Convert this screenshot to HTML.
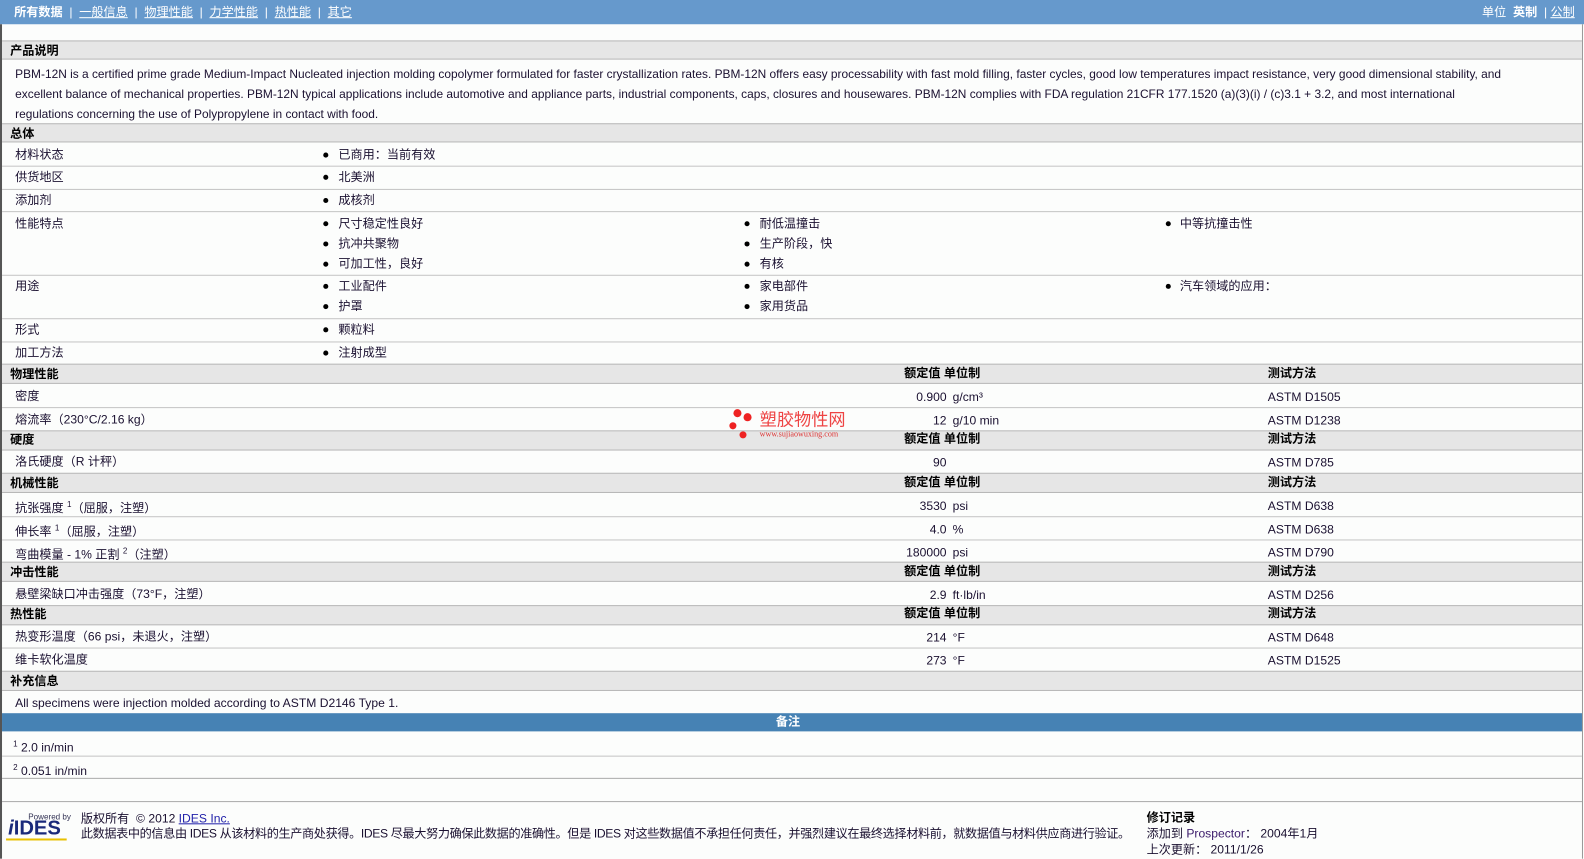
<!DOCTYPE html>
<html><head><meta charset="utf-8"><style>
*{margin:0;padding:0;box-sizing:border-box}
body{width:1584px;height:850px;background:#fcfdfc;overflow:hidden;font-family:"Liberation Sans","Noto Sans CJK SC",sans-serif;font-size:12px;color:#1a1030}
#w{position:absolute;left:0;top:0;width:1568px;height:842px;transform:scale(1.0102);transform-origin:0 0}
.a{position:absolute;white-space:nowrap;line-height:14px}
.hdr{position:absolute;left:0;top:0;width:1568px;height:24px;background:#6699cc}
.hdr .a{color:#fff;top:5px}
.hdr u{color:#fff}
.g{position:absolute;left:2px;width:1564px;background:#e6e6e6;border-top:1px solid #b8b8b8;border-bottom:1px solid #b8b8b8}
.l{position:absolute;left:2px;width:1564px;height:1px;background:#c4c4c4}
.b{font-weight:bold;color:#000}
.dot{position:absolute;width:5px;height:5px;border-radius:50%;background:#000}
</style></head><body><div id="w">
<div class="hdr">
<div class="a" style="left:14px"><b>所有数据</b> &nbsp;| &nbsp;<u>一般信息</u> &nbsp;| &nbsp;<u>物理性能</u> &nbsp;| &nbsp;<u>力学性能</u> &nbsp;| &nbsp;<u>热性能</u> &nbsp;| &nbsp;<u>其它</u></div>
<div class="a" style="left:1467px">单位 &nbsp;<b>英制</b> &nbsp;| <u>公制</u></div>
</div>
<div style="position:absolute;left:0;top:24px;width:2px;height:826px;background:#555"></div>
<div style="position:absolute;left:1566px;top:24px;width:1px;height:826px;background:#999"></div>

<div class="g" style="top:40px;height:19px"></div><div class="a b" style="left:10px;top:43px">产品说明</div>
<div class="a" style="left:15px;top:63px;line-height:20px;font-size:11.8px">PBM-12N is a certified prime grade Medium-Impact Nucleated injection molding copolymer formulated for faster crystallization rates. PBM-12N offers easy processability with fast mold filling, faster cycles, good low temperatures impact resistance, very good dimensional stability, and<br>excellent balance of mechanical properties. PBM-12N typical applications include automotive and appliance parts, industrial components, caps, closures and housewares. PBM-12N complies with FDA regulation 21CFR 177.1520 (a)(3)(i) / (c)3.1 + 3.2, and most international<br>regulations concerning the use of Polypropylene in contact with food.</div>

<div class="g" style="top:122px;height:19px"></div><div class="a b" style="left:10px;top:125px">总体</div>
<div class="a" style="left:15px;top:146px">材料状态</div><div class="dot" style="left:320px;top:151px"></div><div class="a" style="left:335px;top:146px">已商用：当前有效</div>
<div class="l" style="top:164px"></div>
<div class="a" style="left:15px;top:168px">供货地区</div><div class="dot" style="left:320px;top:173px"></div><div class="a" style="left:335px;top:168px">北美洲</div>
<div class="l" style="top:187px"></div>
<div class="a" style="left:15px;top:191px">添加剂</div><div class="dot" style="left:320px;top:196px"></div><div class="a" style="left:335px;top:191px">成核剂</div>
<div class="l" style="top:209px"></div>
<div class="a" style="left:15px;top:214px">性能特点</div>
<div class="dot" style="left:320px;top:219px"></div><div class="a" style="left:335px;top:214px">尺寸稳定性良好</div>
<div class="dot" style="left:320px;top:239px"></div><div class="a" style="left:335px;top:234px">抗冲共聚物</div>
<div class="dot" style="left:320px;top:259px"></div><div class="a" style="left:335px;top:254px">可加工性，良好</div>
<div class="dot" style="left:737px;top:219px"></div><div class="a" style="left:752px;top:214px">耐低温撞击</div>
<div class="dot" style="left:737px;top:239px"></div><div class="a" style="left:752px;top:234px">生产阶段，快</div>
<div class="dot" style="left:737px;top:259px"></div><div class="a" style="left:752px;top:254px">有核</div>
<div class="dot" style="left:1154px;top:219px"></div><div class="a" style="left:1168px;top:214px">中等抗撞击性</div>
<div class="l" style="top:272px"></div>
<div class="a" style="left:15px;top:276px">用途</div>
<div class="dot" style="left:320px;top:281px"></div><div class="a" style="left:335px;top:276px">工业配件</div>
<div class="dot" style="left:320px;top:301px"></div><div class="a" style="left:335px;top:296px">护罩</div>
<div class="dot" style="left:737px;top:281px"></div><div class="a" style="left:752px;top:276px">家电部件</div>
<div class="dot" style="left:737px;top:301px"></div><div class="a" style="left:752px;top:296px">家用货品</div>
<div class="dot" style="left:1154px;top:281px"></div><div class="a" style="left:1168px;top:276px">汽车领域的应用：</div>
<div class="l" style="top:315px"></div>
<div class="a" style="left:15px;top:319px">形式</div><div class="dot" style="left:320px;top:324px"></div><div class="a" style="left:335px;top:319px">颗粒料</div>
<div class="l" style="top:338px"></div>
<div class="a" style="left:15px;top:342px">加工方法</div><div class="dot" style="left:320px;top:347px"></div><div class="a" style="left:335px;top:342px">注射成型</div>

<div class="g" style="top:360px;height:20px"></div><div class="a b" style="left:10px;top:363px">物理性能</div>
<div class="a b" style="left:895px;top:362px">额定值 单位制</div><div class="a b" style="left:1255px;top:362px">测试方法</div>
<div class="a" style="left:15px;top:385px">密度</div><div class="a" style="right:631px;top:386px">0.900</div><div class="a" style="left:943px;top:386px">g/cm³</div><div class="a" style="left:1255px;top:386px">ASTM D1505</div>
<div class="l" style="top:403px"></div>
<div class="a" style="left:15px;top:408px">熔流率（230°C/2.16 kg）</div><div class="a" style="right:631px;top:409px">12</div><div class="a" style="left:943px;top:409px">g/10 min</div><div class="a" style="left:1255px;top:409px">ASTM D1238</div>

<div class="g" style="top:426px;height:20px"></div><div class="a b" style="left:10px;top:428px">硬度</div>
<div class="a b" style="left:895px;top:427px">额定值 单位制</div><div class="a b" style="left:1255px;top:427px">测试方法</div>
<div class="a" style="left:15px;top:450px">洛氏硬度（R 计秤）</div><div class="a" style="right:631px;top:451px">90</div><div class="a" style="left:1255px;top:451px">ASTM D785</div>

<div class="g" style="top:468px;height:20px"></div><div class="a b" style="left:10px;top:471px">机械性能</div>
<div class="a b" style="left:895px;top:470px">额定值 单位制</div><div class="a b" style="left:1255px;top:470px">测试方法</div>
<div class="a" style="left:15px;top:493px">抗张强度 <sup style="font-size:8px">1</sup>（屈服，注塑）</div><div class="a" style="right:631px;top:494px">3530</div><div class="a" style="left:943px;top:494px">psi</div><div class="a" style="left:1255px;top:494px">ASTM D638</div>
<div class="l" style="top:511px"></div>
<div class="a" style="left:15px;top:516px">伸长率 <sup style="font-size:8px">1</sup>（屈服，注塑）</div><div class="a" style="right:631px;top:517px">4.0</div><div class="a" style="left:943px;top:517px">%</div><div class="a" style="left:1255px;top:517px">ASTM D638</div>
<div class="l" style="top:534px"></div>
<div class="a" style="left:15px;top:539px">弯曲模量 - 1% 正割 <sup style="font-size:8px">2</sup>（注塑）</div><div class="a" style="right:631px;top:540px">180000</div><div class="a" style="left:943px;top:540px">psi</div><div class="a" style="left:1255px;top:540px">ASTM D790</div>

<div class="g" style="top:556px;height:20px"></div><div class="a b" style="left:10px;top:559px">冲击性能</div>
<div class="a b" style="left:895px;top:558px">额定值 单位制</div><div class="a b" style="left:1255px;top:558px">测试方法</div>
<div class="a" style="left:15px;top:581px">悬壁梁缺口冲击强度（73°F，注塑）</div><div class="a" style="right:631px;top:582px">2.9</div><div class="a" style="left:943px;top:582px">ft·lb/in</div><div class="a" style="left:1255px;top:582px">ASTM D256</div>

<div class="g" style="top:599px;height:20px"></div><div class="a b" style="left:10px;top:601px">热性能</div>
<div class="a b" style="left:895px;top:600px">额定值 单位制</div><div class="a b" style="left:1255px;top:600px">测试方法</div>
<div class="a" style="left:15px;top:623px">热变形温度（66 psi，未退火，注塑）</div><div class="a" style="right:631px;top:624px">214</div><div class="a" style="left:943px;top:624px">°F</div><div class="a" style="left:1255px;top:624px">ASTM D648</div>
<div class="l" style="top:641px"></div>
<div class="a" style="left:15px;top:646px">维卡软化温度</div><div class="a" style="right:631px;top:647px">273</div><div class="a" style="left:943px;top:647px">°F</div><div class="a" style="left:1255px;top:647px">ASTM D1525</div>

<div class="g" style="top:664px;height:20px"></div><div class="a b" style="left:10px;top:667px">补充信息</div>
<div class="a" style="left:15px;top:689px">All specimens were injection molded according to ASTM D2146 Type 1.</div>
<div style="position:absolute;left:2px;top:706px;width:1564px;height:18px;background:#4682b4"></div>
<div class="a" style="left:768px;top:707px;color:#fff;font-weight:bold">备注</div>
<div class="a" style="left:13px;top:730px"><sup style="font-size:8px">1</sup> 2.0 in/min</div>
<div class="l" style="top:748px"></div>
<div class="a" style="left:13px;top:753px"><sup style="font-size:8px">2</sup> 0.051 in/min</div>
<div class="l" style="top:770px;background:#aaa"></div>
<div class="l" style="top:793px;background:#aaa"></div>

<div class="a" style="left:28px;top:802px;font-size:8px;color:#335">Powered by</div>
<div class="a" style="left:8px;top:809px;font-size:20px;line-height:22px;font-weight:bold;color:#1a2a7a;font-style:italic">i<span style="font-style:normal">IDES</span></div>
<div style="position:absolute;left:6px;top:830px;width:60px;height:2px;background:#e8c000"></div>
<div class="a" style="left:80px;top:803px">版权所有 &nbsp;© 2012 <u style="color:#22a">IDES Inc.</u></div>
<div class="a" style="left:80px;top:818px;letter-spacing:-0.35px">此数据表中的信息由 IDES 从该材料的生产商处获得。IDES 尽最大努力确保此数据的准确性。但是 IDES 对这些数据值不承担任何责任，并强烈建议在最终选择材料前，就数据值与材料供应商进行验证。</div>
<div class="a b" style="left:1135px;top:802px">修订记录</div>
<div class="a" style="left:1135px;top:818px">添加到 <span style="color:#3a1a6a">Prospector</span>： 2004年1月</div>
<div class="a" style="left:1135px;top:834px">上次更新： 2011/1/26</div>

<div style="position:absolute;left:726px;top:405px;width:8px;height:8px;border-radius:50%;background:#e22"></div>
<div style="position:absolute;left:736px;top:409px;width:8px;height:8px;border-radius:50%;background:#e22"></div>
<div style="position:absolute;left:722px;top:418px;width:7px;height:7px;border-radius:50%;background:#e22"></div>
<div style="position:absolute;left:732px;top:427px;width:7px;height:7px;border-radius:50%;background:#e22"></div>
<div class="a" style="left:752px;top:406px;font-size:17px;line-height:19px;color:#e44">塑胶物性网</div>
<div class="a" style="left:752px;top:425px;font-size:8px;line-height:9px;color:#d33;font-family:'Liberation Serif',serif">www.sujiaowuxing.com</div>
</div></body></html>
